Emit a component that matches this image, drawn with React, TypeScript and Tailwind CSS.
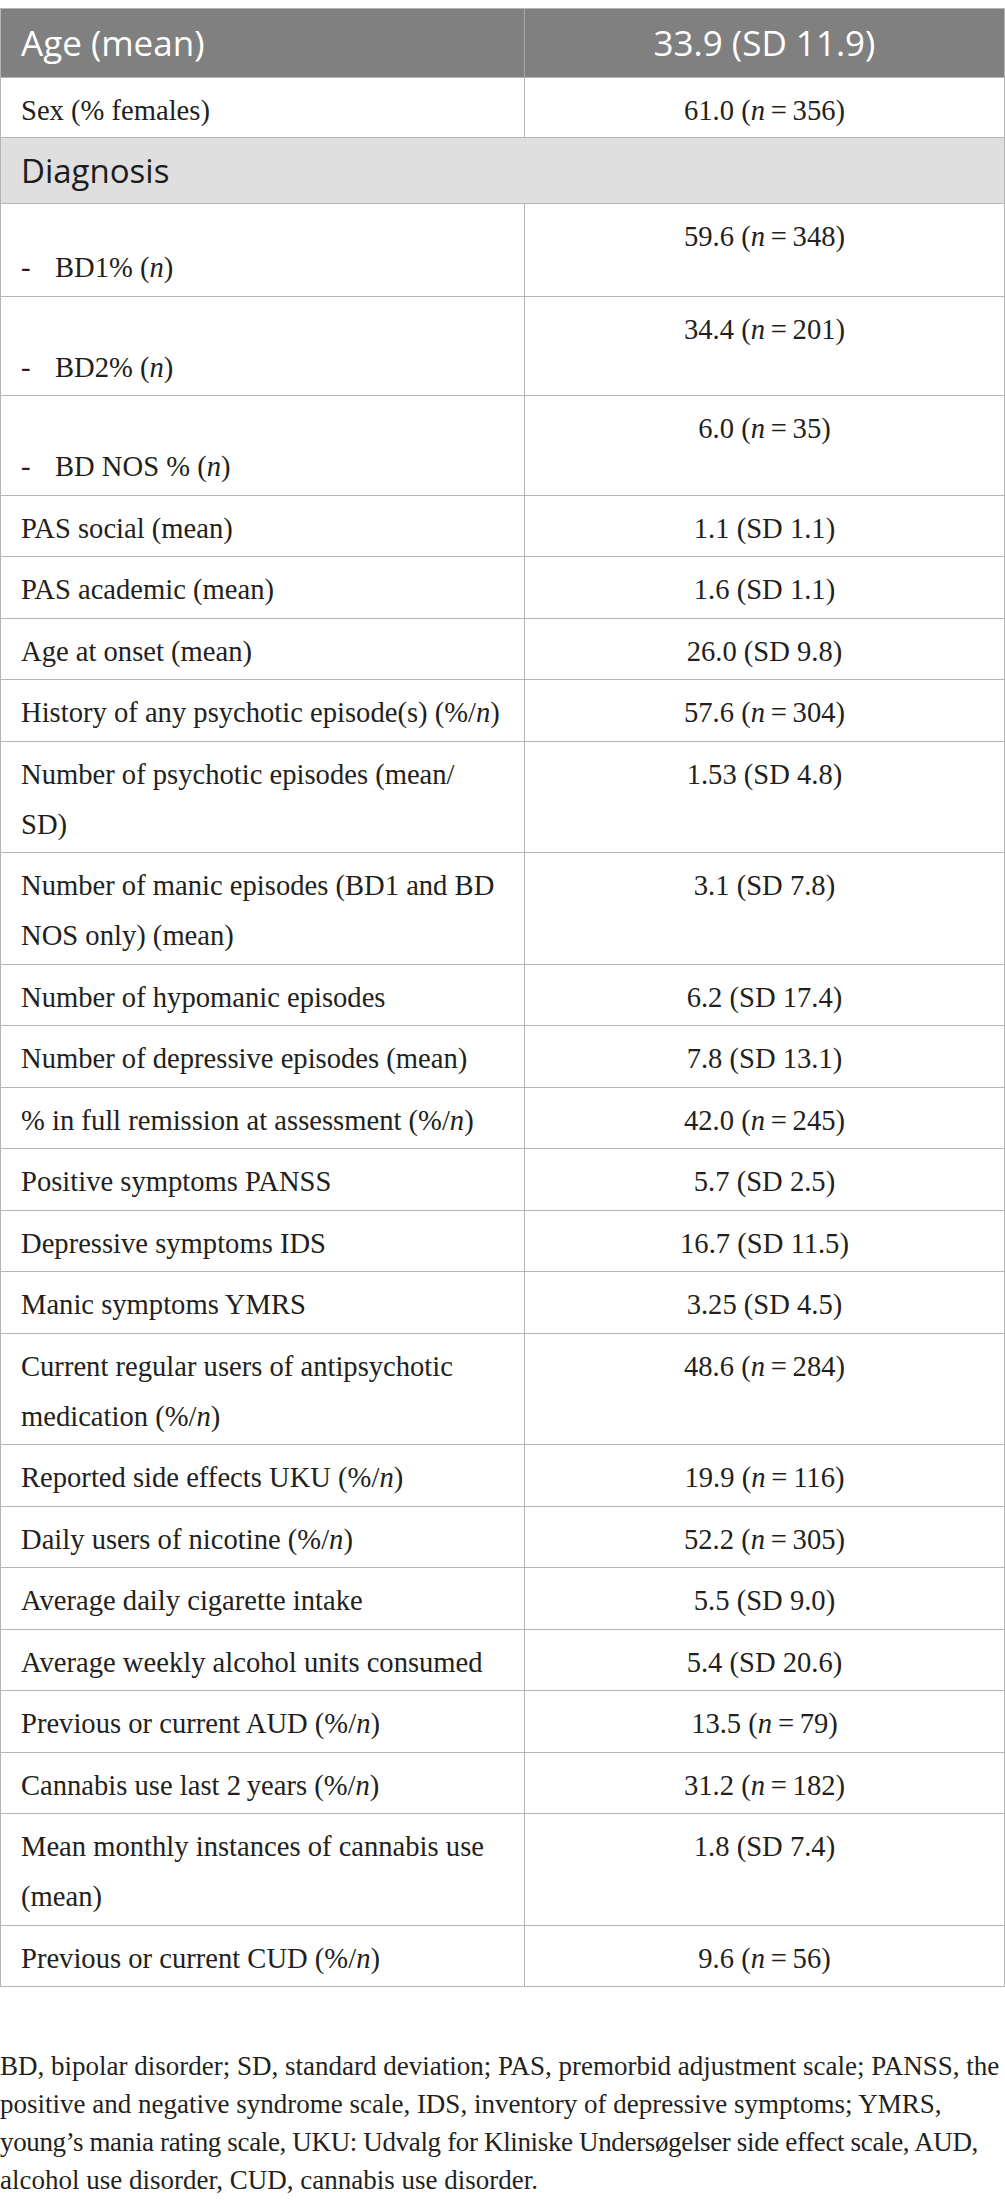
import type { ReactNode } from "react";

const T = "\u2009";

function N({ v, n }: { v: string; n: string }) {
  return (
    <>
      {v} (<i>n</i>
      {T}={T}
      {n})
    </>
  );
}

const PN = (
  <>
    (%/<i>n</i>)
  </>
);

type Row = {
  label: ReactNode;
  value: ReactNode;
  bd?: "one" | "two";
};

const rows: Row[] = [
  { label: "Sex (% females)", value: <N v="61.0" n="356" /> },
  { label: "DIAG", value: null },
  { label: <>BD1% (<i>n</i>)</>, value: <N v="59.6" n="348" />, bd: "one" },
  { label: <>BD2% (<i>n</i>)</>, value: <N v="34.4" n="201" />, bd: "two" },
  { label: <>BD NOS % (<i>n</i>)</>, value: <N v="6.0" n="35" />, bd: "two" },
  { label: "PAS social (mean)", value: "1.1 (SD 1.1)" },
  { label: "PAS academic (mean)", value: "1.6 (SD 1.1)" },
  { label: "Age at onset (mean)", value: "26.0 (SD 9.8)" },
  { label: <>History of any psychotic episode(s) {PN}</>, value: <N v="57.6" n="304" /> },
  {
    label: (
      <>
        Number of psychotic episodes (mean/
        <br />
        SD)
      </>
    ),
    value: "1.53 (SD 4.8)",
  },
  {
    label: (
      <>
        Number of manic episodes (BD1 and BD
        <br />
        NOS only) (mean)
      </>
    ),
    value: "3.1 (SD 7.8)",
  },
  { label: "Number of hypomanic episodes", value: "6.2 (SD 17.4)" },
  { label: "Number of depressive episodes (mean)", value: "7.8 (SD 13.1)" },
  { label: <>% in full remission at assessment {PN}</>, value: <N v="42.0" n="245" /> },
  { label: "Positive symptoms PANSS", value: "5.7 (SD 2.5)" },
  { label: "Depressive symptoms IDS", value: "16.7 (SD 11.5)" },
  { label: "Manic symptoms YMRS", value: "3.25 (SD 4.5)" },
  {
    label: (
      <>
        Current regular users of antipsychotic
        <br />
        medication {PN}
      </>
    ),
    value: <N v="48.6" n="284" />,
  },
  { label: <>Reported side effects UKU {PN}</>, value: <N v="19.9" n="116" /> },
  { label: <>Daily users of nicotine {PN}</>, value: <N v="52.2" n="305" /> },
  { label: "Average daily cigarette intake", value: "5.5 (SD 9.0)" },
  { label: "Average weekly alcohol units consumed", value: "5.4 (SD 20.6)" },
  { label: <>Previous or current AUD {PN}</>, value: <N v="13.5" n="79" /> },
  { label: <>Cannabis use last 2{T}years {PN}</>, value: <N v="31.2" n="182" /> },
  {
    label: (
      <>
        Mean monthly instances of cannabis use
        <br />
        (mean)
      </>
    ),
    value: "1.8 (SD 7.4)",
  },
  { label: <>Previous or current CUD {PN}</>, value: <N v="9.6" n="56" /> },
];

function BodyRow({ row, first }: { row: Row; first: boolean }) {
  if (row.label === "DIAG") {
    return (
      <div className="flex h-[66px] items-center border-b border-[#b5b5b5] bg-[#e0dfe0] pl-[20px] font-['Open_Sans',sans-serif] text-[33px] text-[#1c1c1c]">
        Diagnosis
      </div>
    );
  }

  return (
    <div
      className={
        first
          ? "flex h-[60px] border-b border-[#b5b5b5]"
          : "flex border-b border-[#b5b5b5] pt-[8px] pb-[2.5px]"
      }
    >
      <div
        className={
          first
            ? "w-[524px] shrink-0 border-r border-[#b5b5b5] pt-[8px] pl-[20px]"
            : "-mt-[8px] -mb-[2.5px] w-[524px] shrink-0 border-r border-[#b5b5b5] pt-[8px] pb-[2.5px] pl-[20px]"
        }
      >
        {row.bd ? (
          <div className={row.bd === "one" ? "mt-[31px]" : "mt-[38px]"}>
            <span className="inline-block w-[34px]">-</span>
            {row.label}
          </div>
        ) : (
          row.label
        )}
      </div>
      <div className={first ? "flex-1 pt-[8px] text-center" : "flex-1 text-center"}>
        {row.value}
      </div>
    </div>
  );
}

const footnote = [
  "BD, bipolar disorder; SD, standard deviation; PAS, premorbid adjustment scale; PANSS, the",
  "positive and negative syndrome scale, IDS, inventory of depressive symptoms; YMRS,",
  "young’s mania rating scale, UKU: Udvalg for Kliniske Undersøgelser side effect scale, AUD,",
  "alcohol use disorder, CUD, cannabis use disorder.",
];

export default function App() {
  return (
    <div className="w-[1005px] bg-white pt-[8px] pb-[20px] font-['Liberation_Serif',serif] text-[28.6px] leading-[50px] text-[#231f20]">
      <div className="border-x border-t border-[#b5b5b5]">
        <div className="flex h-[69px] border-b border-[#b5b5b5] bg-[#808080] font-['Open_Sans',sans-serif] text-[35px] leading-[68px] text-white">
          <div className="w-[524px] shrink-0 border-r border-[#a9a9a9] pl-[20px]">Age (mean)</div>
          <div className="flex-1 text-center">33.9 (SD 11.9)</div>
        </div>
        {rows.map((row, i) => (
          <BodyRow key={i} row={row} first={i === 0} />
        ))}
      </div>

      <div className="mt-[60px] text-[27px] whitespace-nowrap">
        {footnote.map((line, i) => (
          <div
            key={i}
            className={i === 2 ? "h-[38px] leading-[38px] tracking-[-0.35px]" : "h-[38px] leading-[38px]"}
          >
            {line}
          </div>
        ))}
      </div>
    </div>
  );
}
